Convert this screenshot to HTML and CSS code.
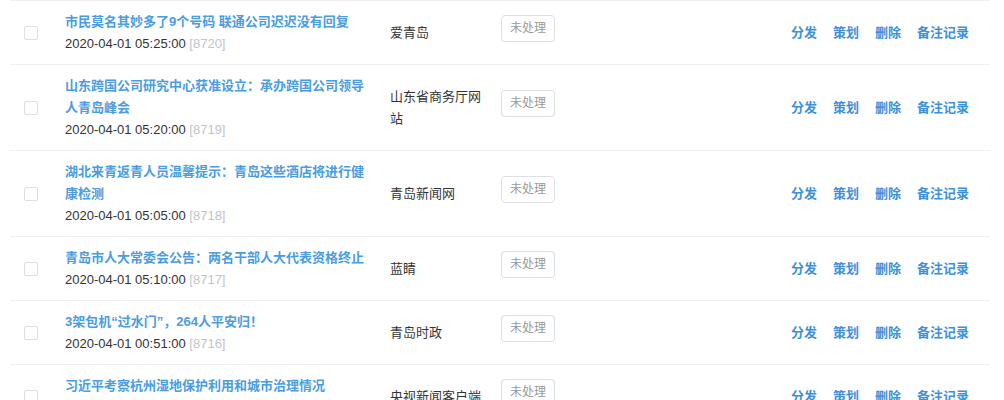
FILE: index.html
```html
<!DOCTYPE html>
<html lang="zh-CN">
<head>
<meta charset="utf-8">
<title>列表</title>
<link rel="stylesheet" href="styles.css">
</head>
<body>
<div class="list">
  <div class="row">
    <div class="cell-check"><span class="checkbox"></span></div>
    <div class="cell-title">
      <a class="title">市民莫名其妙多了9个号码 联通公司迟迟没有回复</a>
      <div class="meta">2020-04-01 05:25:00 <span class="id">[8720]</span></div>
    </div>
    <div class="cell-source">爱青岛</div>
    <div class="cell-status"><span class="badge">未处理</span></div>
    <div class="cell-actions"><a>分发</a><a>策划</a><a>删除</a><a>备注记录</a></div>
  </div>
  <div class="row">
    <div class="cell-check"><span class="checkbox"></span></div>
    <div class="cell-title">
      <a class="title">山东跨国公司研究中心获准设立：承办跨国公司领导人青岛峰会</a>
      <div class="meta">2020-04-01 05:20:00 <span class="id">[8719]</span></div>
    </div>
    <div class="cell-source">山东省商务厅网站</div>
    <div class="cell-status"><span class="badge">未处理</span></div>
    <div class="cell-actions"><a>分发</a><a>策划</a><a>删除</a><a>备注记录</a></div>
  </div>
  <div class="row">
    <div class="cell-check"><span class="checkbox"></span></div>
    <div class="cell-title">
      <a class="title">湖北来青返青人员温馨提示：青岛这些酒店将进行健康检测</a>
      <div class="meta">2020-04-01 05:05:00 <span class="id">[8718]</span></div>
    </div>
    <div class="cell-source">青岛新闻网</div>
    <div class="cell-status"><span class="badge">未处理</span></div>
    <div class="cell-actions"><a>分发</a><a>策划</a><a>删除</a><a>备注记录</a></div>
  </div>
  <div class="row">
    <div class="cell-check"><span class="checkbox"></span></div>
    <div class="cell-title">
      <a class="title">青岛市人大常委会公告：两名干部人大代表资格终止</a>
      <div class="meta">2020-04-01 05:10:00 <span class="id">[8717]</span></div>
    </div>
    <div class="cell-source">蓝睛</div>
    <div class="cell-status"><span class="badge">未处理</span></div>
    <div class="cell-actions"><a>分发</a><a>策划</a><a>删除</a><a>备注记录</a></div>
  </div>
  <div class="row">
    <div class="cell-check"><span class="checkbox"></span></div>
    <div class="cell-title">
      <a class="title">3架包机“过水门”，264人平安归！</a>
      <div class="meta">2020-04-01 00:51:00 <span class="id">[8716]</span></div>
    </div>
    <div class="cell-source">青岛时政</div>
    <div class="cell-status"><span class="badge">未处理</span></div>
    <div class="cell-actions"><a>分发</a><a>策划</a><a>删除</a><a>备注记录</a></div>
  </div>
  <div class="row">
    <div class="cell-check"><span class="checkbox"></span></div>
    <div class="cell-title">
      <a class="title">习近平考察杭州湿地保护利用和城市治理情况</a>
      <div class="meta">2020-04-01 00:30:00 <span class="id">[8715]</span></div>
    </div>
    <div class="cell-source">央视新闻客户端</div>
    <div class="cell-status"><span class="badge">未处理</span></div>
    <div class="cell-actions"><a>分发</a><a>策划</a><a>删除</a><a>备注记录</a></div>
  </div>
</div>
</body>
</html>
```
FILE: styles.css
```css
html, body {
  margin: 0;
  padding: 0;
  background: #ffffff;
}
body {
  font-family: "Liberation Sans", "Noto Sans CJK SC", sans-serif;
  font-size: 13px;
  color: #333333;
  line-height: 22px;
}
.list {
  margin: 0 14px 0 10px;
  border-top: 1px solid #f0f0f0;
}
.row {
  display: flex;
  align-items: center;
  padding: 10px 0 9px;
  border-bottom: 1px solid #f0f0f0;
}
.cell-check {
  width: 55px;
  flex: none;
  display: flex;
}
.checkbox {
  display: block;
  width: 12px;
  height: 12px;
  margin-left: 14px;
  border: 1px solid #dcdfe6;
  border-radius: 2px;
  background: #fff;
}
.cell-title {
  width: 305px;
  flex: none;
}
.title {
  display: block;
  color: #4a9de0;
  font-weight: 600;
  text-decoration: none;
}
.meta {
  color: #333333;
}
.id {
  color: #c0c4cc;
}
.cell-source {
  width: 95px;
  margin-left: 20px;
  flex: none;
}
.cell-status {
  margin-left: 16px;
  flex: none;
  display: flex;
  margin-bottom: 10px;
}
.badge {
  display: inline-block;
  height: 25px;
  line-height: 25px;
  padding: 0 8px;
  border: 1px solid #dcdfe6;
  border-radius: 4px;
  font-size: 12px;
  color: #999999;
}
.cell-actions {
  margin-left: auto;
  padding-right: 21px;
  display: flex;
  gap: 16px;
}
.cell-actions a {
  color: #3d91d9;
  font-weight: 600;
  cursor: pointer;
}
```
